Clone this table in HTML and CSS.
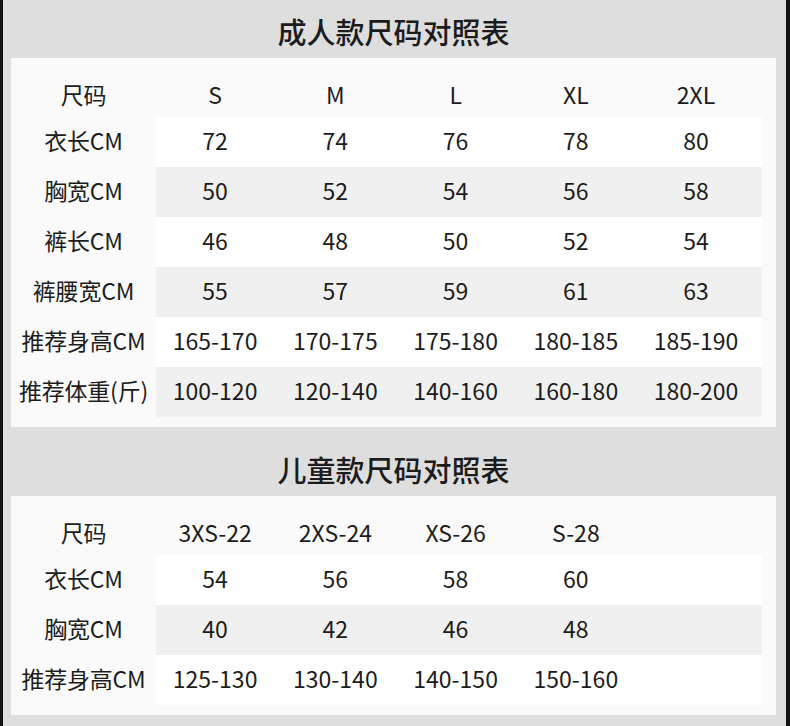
FILE: index.html
```html
<!DOCTYPE html>
<html lang="zh-CN">
<head>
<meta charset="utf-8">
<title>尺码对照表</title>
<link rel="stylesheet" href="styles.css">
</head>
<body>
<div class="frame">
  <div class="page">
    <h2 class="title title-first">成人款尺码对照表</h2>
    <div class="panel">
      <div class="row head"><div class="label">尺码</div><div class="cell">S</div><div class="cell">M</div><div class="cell">L</div><div class="cell">XL</div><div class="cell">2XL</div></div>
      <div class="row light"><div class="label">衣长CM</div><div class="cell">72</div><div class="cell">74</div><div class="cell">76</div><div class="cell">78</div><div class="cell">80</div></div>
      <div class="row shade"><div class="label">胸宽CM</div><div class="cell">50</div><div class="cell">52</div><div class="cell">54</div><div class="cell">56</div><div class="cell">58</div></div>
      <div class="row light"><div class="label">裤长CM</div><div class="cell">46</div><div class="cell">48</div><div class="cell">50</div><div class="cell">52</div><div class="cell">54</div></div>
      <div class="row shade"><div class="label">裤腰宽CM</div><div class="cell">55</div><div class="cell">57</div><div class="cell">59</div><div class="cell">61</div><div class="cell">63</div></div>
      <div class="row light"><div class="label">推荐身高CM</div><div class="cell">165-170</div><div class="cell">170-175</div><div class="cell">175-180</div><div class="cell">180-185</div><div class="cell">185-190</div></div>
      <div class="row shade"><div class="label">推荐体重(斤)</div><div class="cell">100-120</div><div class="cell">120-140</div><div class="cell">140-160</div><div class="cell">160-180</div><div class="cell">180-200</div></div>
    </div>
    <h2 class="title title-second">儿童款尺码对照表</h2>
    <div class="panel">
      <div class="row head"><div class="label">尺码</div><div class="cell">3XS-22</div><div class="cell">2XS-24</div><div class="cell">XS-26</div><div class="cell">S-28</div><div class="cell"></div></div>
      <div class="row light"><div class="label">衣长CM</div><div class="cell">54</div><div class="cell">56</div><div class="cell">58</div><div class="cell">60</div><div class="cell"></div></div>
      <div class="row shade"><div class="label">胸宽CM</div><div class="cell">40</div><div class="cell">42</div><div class="cell">46</div><div class="cell">48</div><div class="cell"></div></div>
      <div class="row light"><div class="label">推荐身高CM</div><div class="cell">125-130</div><div class="cell">130-140</div><div class="cell">140-150</div><div class="cell">150-160</div><div class="cell"></div></div>
    </div>
  </div>
</div>
</body>
</html>
```

FILE: styles.css
```css
html, body {
  margin: 0;
  padding: 0;
  background: #121212;
}
body {
  font-family: "Noto Sans CJK SC", "Noto Sans", sans-serif;
  color: #1c1c1c;
}
.frame {
  width: 790px;
  height: 726px;
  padding: 0 4px 0 3px;
  box-sizing: border-box;
  overflow: hidden;
}
.page {
  background: #dedede;
  height: 726px;
  padding: 0 10px 0 8px;
  box-sizing: border-box;
}
.title {
  margin: 0;
  text-align: center;
  font-size: 29px;
  font-weight: 500;
  line-height: 50px;
  height: 50px;
}
.title-first {
  padding-top: 6px;
  padding-bottom: 2px;
}
.title-second {
  padding-top: 17px;
  padding-bottom: 2px;
}
.panel {
  background: #fafafa;
  padding: 9px 14px 10px 0;
}
.row {
  display: grid;
  grid-template-columns: 145px repeat(4, 120.25px) 1fr;
  height: 50px;
  font-size: 23px;
  line-height: 47px;
  text-align: center;
}
.row.head {
  line-height: 54px;
}
.label {
  white-space: nowrap;
  letter-spacing: -0.2px;
}
.cell {
  padding-right: 2px;
}
.cell:last-child {
  padding-right: 7px;
}
.row.light .cell {
  background: #ffffff;
}
.row.shade .cell {
  background: #f0f0f0;
}
```
